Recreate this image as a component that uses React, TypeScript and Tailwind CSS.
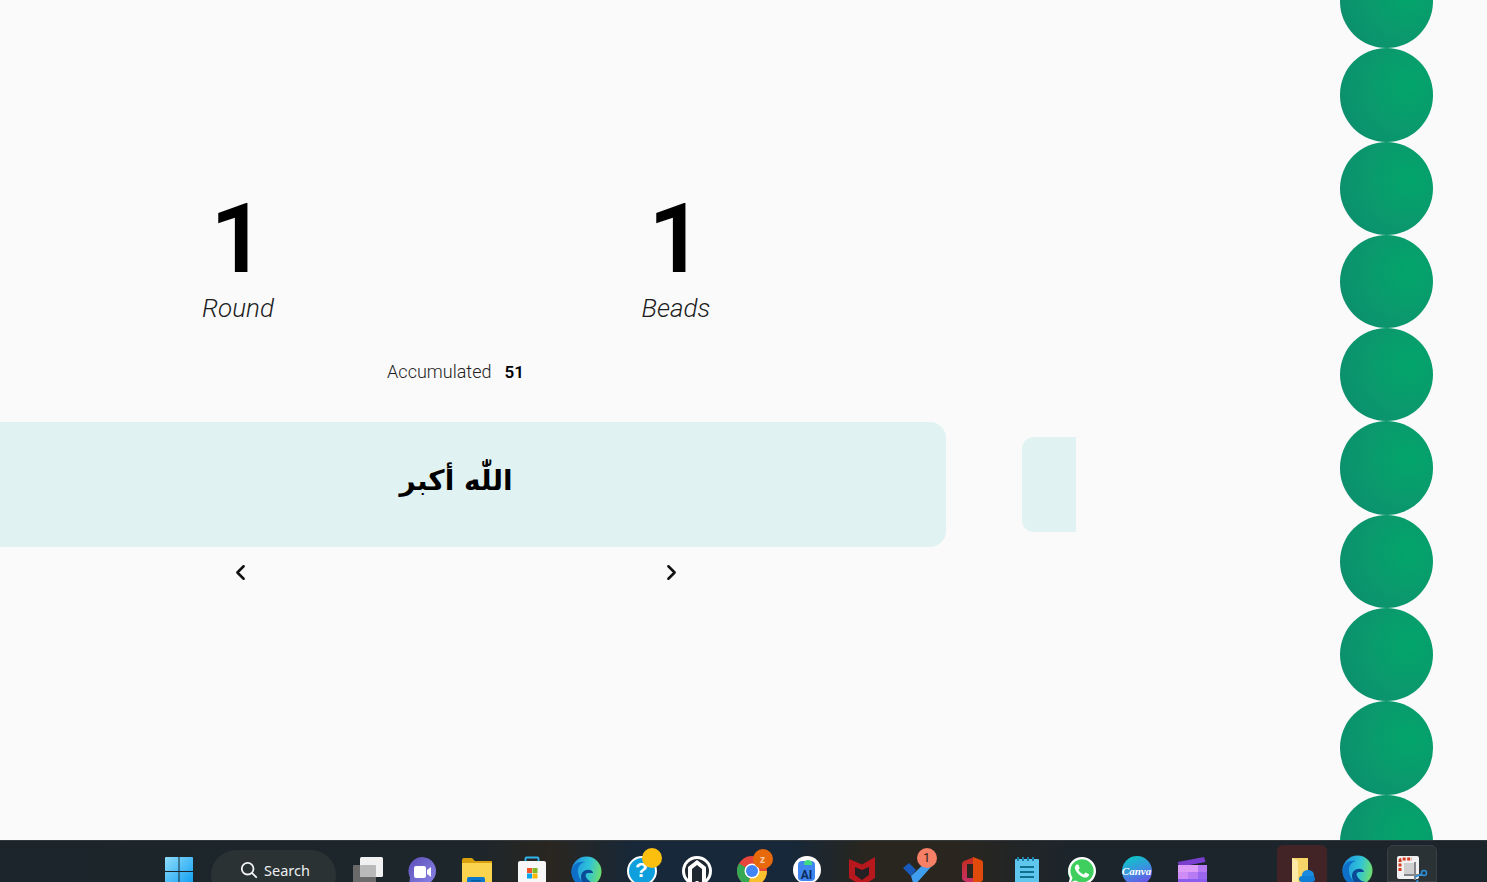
import { ChevronLeft, ChevronRight } from "lucide-react"
import { FaWhatsapp } from "react-icons/fa"

const beads = Array.from({ length: 10 }, (_, i) => i)

function WindowsIcon() {
  return (
    <svg width="30" height="30" viewBox="0 0 30 30">
      <defs>
        <linearGradient id="win" x1="0" y1="0" x2="1" y2="1">
          <stop offset="0" stopColor="#8fdcfb" />
          <stop offset="1" stopColor="#0a9df2" />
        </linearGradient>
      </defs>
      <path d="M1 2a1 1 0 0 1 1-1h12.500v14H1zM15.500 1H28a1 1 0 0 1 1 1v13H15.500zM1 16h13.500v14H1zM15.500 16H29v14H15.500z" fill="url(#win)" />
    </svg>
  )
}

function TaskViewIcon() {
  return (
    <svg width="32" height="30" viewBox="0 0 32 30">
      <rect x="0" y="9" width="23" height="21" rx="1" fill="#6a6a6a" />
      <rect x="7" y="1" width="23" height="20" rx="1.500" fill="#f1f1f1" />
      <rect x="7" y="9" width="16" height="12" rx="1" fill="#b9b9b9" />
    </svg>
  )
}

function MeetIcon() {
  return (
    <svg width="30" height="30" viewBox="0 0 30 30">
      <defs>
        <linearGradient id="meet" x1="0" y1="0" x2="1" y2="1">
          <stop offset="0" stopColor="#5a4fb8" />
          <stop offset="1" stopColor="#8d86e8" />
        </linearGradient>
      </defs>
      <path d="M15 1a14 14 0 1 1-8 25.500l-5 3 1-8A14 14 0 0 1 15 1z" fill="url(#meet)" />
      <rect x="7" y="10" width="12" height="12" rx="2" fill="#fff" />
      <path d="M20 14l4-3v10l-4-3z" fill="#fff" />
    </svg>
  )
}

function FolderIcon() {
  return (
    <svg width="32" height="30" viewBox="0 0 32 30">
      <path d="M1 4a2 2 0 0 1 2-2h8l3 3h17v6H1z" fill="#d9a10d" />
      <rect x="1" y="6" width="30" height="24" fill="#fbd44f" />
      <rect x="1" y="5" width="30" height="2" fill="#d9a10d" />
      <rect x="6" y="21" width="18" height="10" rx="2" fill="#0a78cf" />
      <rect x="10" y="24" width="10" height="1.500" fill="#075a9c" />
    </svg>
  )
}

function StoreIcon() {
  return (
    <svg width="30" height="30" viewBox="0 0 30 30">
      <path d="M8.500 6V2.500a1 1 0 0 1 1-1h11a1 1 0 0 1 1 1V6" fill="none" stroke="#2fb4ee" strokeWidth="1.800" />
      <path d="M1 7a2 2 0 0 1 2-2h24a2 2 0 0 1 2 2v23H1z" fill="#f7f7f7" />
      <rect x="10" y="12" width="5" height="5" fill="#f0562a" />
      <rect x="15.500" y="12" width="5" height="5" fill="#7fba21" />
      <rect x="10" y="17.500" width="5" height="5" fill="#06a5ee" />
      <rect x="15.500" y="17.500" width="5" height="5" fill="#fbb708" />
    </svg>
  )
}

function EdgeIcon({ id }: { id: string }) {
  return (
    <svg width="31" height="31" viewBox="0 0 31 31">
      <defs>
        <linearGradient id={`${id}a`} x1="0" y1="0.4" x2="1" y2="0.6">
          <stop offset="0" stopColor="#1f8fe0" />
          <stop offset="0.55" stopColor="#2fc4d8" />
          <stop offset="1" stopColor="#72e06a" />
        </linearGradient>
      </defs>
      <circle cx="15.500" cy="15.500" r="15" fill={`url(#${id}a)`} />
      <path d="M.5 16C1 8 8 5 14 6c-5 1-8 5-7 11 1 7 7 13 14 13-2 1-4 1.500-6 1.500C7 31 .5 24 .5 16z" fill="#0d6fc8" />
      <path d="M10 21c0-5 4-8 9-7 2 .5 3 2 3 3h-5c-2 0-3 2-2 4s4 6 9 6l-4 3c-6 0-10-4-10-9z" fill="#0a4a96" />
    </svg>
  )
}

function HelpIcon() {
  return (
    <div className="relative h-[30px] w-[30px]">
      <div className="flex h-[30px] w-[30px] items-start justify-center rounded-full border-2 border-white bg-[#0e9fdc] pt-[1px]">
        <span className="font-['Liberation_Sans',sans-serif] text-[21px] leading-[22px] font-bold text-white">?</span>
      </div>
      <div className="absolute -top-[8px] left-[15px] h-5 w-5 rounded-full bg-[#fdbf0d]" />
    </div>
  )
}

function NordIcon() {
  return (
    <svg width="30" height="30" viewBox="0 0 30 30">
      <circle cx="15" cy="15" r="15" fill="#fff" />
      <circle cx="15" cy="15" r="12" fill="#1f2730" />
      <path d="M15 4l9 7v17h-4V13l-5-4-5 4v15H6V11z" fill="#fff" />
      <path d="M9 30l6-6 6 6z" fill="#fff" />
      <path d="M12.500 13v12h5V13l-2.500-2z" fill="#1f2730" />
    </svg>
  )
}

function ChromeIcon() {
  return (
    <div className="relative h-[30px] w-[30px]">
      <svg width="30" height="30" viewBox="0 0 30 30">
        <circle cx="15" cy="15" r="15" fill="#e8453c" />
        <path d="M15 15L2 7.500A15 15 0 0 0 11 29.500z" fill="#34a853" />
        <path d="M15 15h15a15 15 0 0 1-19 14.500z" fill="#fbc02d" />
        <circle cx="15" cy="15" r="7.500" fill="#fff" />
        <circle cx="15" cy="15" r="6" fill="#4285f4" />
      </svg>
      <div className="absolute -top-[7px] left-[16px] flex h-5 w-5 items-center justify-center rounded-full bg-[#e8690b] font-['Roboto',sans-serif] text-[10px] font-bold text-[#f8c9a0]">
        z
      </div>
    </div>
  )
}

function StudioIcon() {
  return (
    <div className="relative flex h-[28px] w-[28px] justify-center rounded-full bg-white pt-[5px]">
      <div className="flex h-[20px] w-[17px] items-end justify-center rounded-sm bg-[#3f86f0] font-['Roboto',sans-serif] text-[12px] leading-none font-bold text-[#0c2c5c]">
        AI
      </div>
      <div className="absolute top-[4px] left-[11px] h-[5px] w-[8px] rounded-t-full bg-[#3ddc84]" />
    </div>
  )
}

function McAfeeIcon() {
  return (
    <svg width="26" height="30" viewBox="0 0 26 30">
      <path d="M0 3l13 5.500L26 1v21l-13 8-13-8z" fill="#b7181d" />
      <path d="M6 11l7 3 7-3v8l-7 5-7-5z" fill="#231f22" />
    </svg>
  )
}

function TodoIcon() {
  return (
    <div className="relative h-[30px] w-[30px]">
      <svg width="30" height="30" viewBox="0 0 30 30">
        <path d="M1 12l6-5 7 7-5 6z" fill="#195abd" />
        <path d="M9 20L24 6l5 5-17 19z" fill="#3f9ef0" />
      </svg>
      <div className="absolute -top-[8px] left-[15px] flex h-5 w-5 items-center justify-center rounded-full bg-[#f58066] font-['Roboto',sans-serif] text-xs text-[#2a1a18]">
        1
      </div>
    </div>
  )
}

function OfficeIcon() {
  return (
    <svg width="24" height="30" viewBox="0 0 24 30">
      <defs>
        <linearGradient id="office" x1="0" y1="0" x2="0" y2="1">
          <stop offset="0" stopColor="#c42b1c" />
          <stop offset="1" stopColor="#c8326e" />
        </linearGradient>
      </defs>
      <path d="M14 1L4 5Q2 6 2 8v14q0 2 2 3l10 4z" fill="url(#office)" />
      <rect x="7" y="8" width="8" height="14" fill="#2a261f" />
      <path d="M13 1l8 3q2 .7 2 3v16q0 2.300-2 3l-8 3z" fill="#e04a0a" />
    </svg>
  )
}

function NotepadIcon() {
  return (
    <svg width="26" height="30" viewBox="0 0 26 30">
      <rect x="1" y="3" width="24" height="27" rx="1" fill="#5fc6ee" />
      <rect x="3" y="1" width="2" height="4" fill="#1d7fa8" />
      <rect x="8" y="1" width="2" height="4" fill="#1d7fa8" />
      <rect x="13" y="1" width="2" height="4" fill="#1d7fa8" />
      <rect x="18" y="1" width="2" height="4" fill="#1d7fa8" />
      <rect x="6" y="10" width="14" height="2" fill="#12708f" />
      <rect x="6" y="15" width="14" height="2" fill="#12708f" />
      <rect x="6" y="20" width="14" height="2" fill="#12708f" />
    </svg>
  )
}

function WhatsAppIcon() {
  return (
    <div className="relative flex h-[30px] w-[30px] items-center justify-center">
      <div className="absolute h-[27px] w-[27px] rounded-full bg-[#3fcf5e]" />
      <FaWhatsapp className="relative text-white" size={32} />
    </div>
  )
}

function CanvaIcon() {
  return (
    <div className="flex h-[30px] w-[30px] items-center justify-center rounded-full bg-[linear-gradient(160deg,#0fc4c8_10%,#3d8fe0_50%,#7c3bea_100%)] font-['Liberation_Serif',serif] text-[11px] font-bold text-white italic">
      Canva
    </div>
  )
}

function ClapperIcon() {
  return (
    <svg width="30" height="30" viewBox="0 0 30 30">
      <path d="M1 6L27 1l1.500 5L2 11z" fill="#7b3fd0" />
      <rect x="1" y="9" width="29" height="21" fill="#8a5cf0" />
      <rect x="1" y="9" width="20" height="7" fill="#dc9cf8" />
      <rect x="1" y="16" width="10" height="7" fill="#d08cf6" />
      <rect x="11" y="16" width="10" height="7" fill="#b77cf4" />
      <rect x="21" y="9" width="9" height="7" fill="#b57af4" />
      <rect x="21" y="16" width="9" height="7" fill="#9a66f0" />
    </svg>
  )
}

function OneDriveFolderIcon() {
  return (
    <svg width="28" height="30" viewBox="0 0 28 30">
      <rect x="4" y="0" width="16" height="30" fill="#f8d568" />
      <path d="M4 0l6 3v27H4z" fill="#fdeaa6" />
      <ellipse cx="20" cy="17" rx="6" ry="5" fill="#1a8ae0" />
      <rect x="11" y="18" width="16" height="6" rx="3" fill="#0f7fd6" />
    </svg>
  )
}

function SnipIcon() {
  return (
    <svg width="32" height="30" viewBox="0 0 32 30">
      <rect x="1" y="0" width="22" height="23" rx="2" fill="#f1f1f1" />
      <path d="M4 15V5a2 2 0 0 1 2-2h10" fill="none" stroke="#d3391c" strokeWidth="3" strokeDasharray="3 1.500" />
      <rect x="8" y="7" width="12" height="12" fill="#cfcfcf" />
      <path d="M19 6v18M8 19h18" stroke="#85868c" strokeWidth="2" />
      <circle cx="28" cy="17" r="2.500" fill="none" stroke="#2a8fd8" strokeWidth="1.600" />
      <path d="M19 21l7-3M22 24l-3 5" stroke="#2a8fd8" strokeWidth="1.800" />
    </svg>
  )
}

const pinnedApps = [
  <MeetIcon />,
  <FolderIcon />,
  <StoreIcon />,
  <EdgeIcon id="edge1" />,
  <HelpIcon />,
  <NordIcon />,
  <ChromeIcon />,
  <StudioIcon />,
  <McAfeeIcon />,
  <TodoIcon />,
  <OfficeIcon />,
  <NotepadIcon />,
  <WhatsAppIcon />,
  <CanvaIcon />,
  <ClapperIcon />,
]

function Taskbar() {
  return (
    <div className="flex h-[42px] shrink-0 overflow-hidden border-t border-[#33383d] bg-[linear-gradient(90deg,#1c252b_0%,#1d262b_32%,#2a2620_37%,#16283a_43%,#16283a_53%,#28261f_58%,#2a261f_64%,#1c252c_72%,#1c252c_100%)] pl-[151px]">
      <div className="flex w-[55px] justify-center pt-[15px]">
        <WindowsIcon />
      </div>
      <div className="mt-[9px] ml-[5px] flex h-[50px] w-[125px] justify-center gap-[6px] rounded-full bg-[#2a3234] pt-[9px] pl-[3px]">
        <svg width="18" height="18" viewBox="0 0 20 20" className="mt-[2px]" fill="none" stroke="#f2f4f4" strokeWidth="2">
          <circle cx="8.500" cy="8.500" r="6.500" />
          <path d="M13.500 13.500L18 18" strokeLinecap="round" />
        </svg>
        <span className="font-['Noto_Sans',sans-serif] text-[14.5px] leading-[22px] text-[#eef0f0]">Search</span>
      </div>
      <div className="ml-[5px] flex w-[55px] justify-center pt-[15px]">
        <TaskViewIcon />
      </div>
      <div className="-ml-[2px] flex">
        {pinnedApps.map((app, i) => (
          <div key={i} className="flex w-[55px] justify-center pt-[15px]">
            {app}
          </div>
        ))}
      </div>
      <div className="mt-1 ml-[58px] flex w-[50px] justify-center rounded-t-md bg-[#432426] pt-[13px]">
        <OneDriveFolderIcon />
      </div>
      <div className="mt-1 flex w-[60px] justify-center pt-[10px]">
        <EdgeIcon id="edge2" />
      </div>
      <div className="mt-1 flex w-[50px] justify-center rounded-t-md border border-[#3a4044] bg-[#2b3236] pt-[10px]">
        <SnipIcon />
      </div>
    </div>
  )
}

function Stat({ value, label }: { value: string; label: string }) {
  return (
    <div className="flex w-[438px] flex-col items-center">
      <div className="mt-[2px] text-[97px] leading-[109px] font-semibold text-black">{value}</div>
      <div className="text-[26px] leading-[28px] font-light text-[#1c1c1c] italic">{label}</div>
    </div>
  )
}

export default function App() {
  return (
    <div className="flex h-screen w-full flex-col overflow-hidden bg-[#fafafa] font-['Roboto',sans-serif]">
      <div className="flex min-h-0 flex-1">
        <div className="w-[1076px] shrink-0 overflow-hidden pt-[183px]">
          <div className="flex pl-[19px]">
            <Stat value="1" label="Round" />
            <Stat value="1" label="Beads" />
          </div>
          <div className="mt-[36px] flex w-[910px] items-center justify-center gap-[14px] pl-[1px] text-[18px] leading-[28px]">
            <span className="font-light text-[#222]">Accumulated</span>
            <span className="-mt-[1px] -ml-[1px] text-[17px] font-semibold text-black">51</span>
          </div>
          <div className="mt-[36px] -ml-[36px] flex items-center">
            <div className="flex h-[125px] w-[982px] shrink-0 justify-center rounded-2xl bg-[#e0f2f1] pt-[31px] pl-[2px]">
              <span dir="rtl" className="font-['DejaVu_Sans',sans-serif] text-[28px] leading-[56px] font-bold text-black">
                اللّٰه أكبر
              </span>
            </div>
            <div className="ml-[76px] h-[95px] w-[100px] shrink-0 rounded-xl bg-[#e0f2f1]" />
          </div>
          <div className="mt-[13px] flex w-[910px] justify-center gap-[406px] pl-[1px] text-[#111]">
            <ChevronLeft size={25} strokeWidth={2.4} />
            <ChevronRight size={25} strokeWidth={2.4} />
          </div>
        </div>
        <div className="-mt-[45px] ml-[264px] flex w-[93px] shrink-0 flex-col">
          {beads.map((bead) => (
            <div
              key={bead}
              className="h-[93.3px] w-[93px] shrink-0 rounded-full bg-[radial-gradient(circle_at_75%_40%,#02a56b_0%,#0a9a6c_45%,#0b926d_75%,#1f7f72_100%)]"
            />
          ))}
        </div>
      </div>
      <Taskbar />
    </div>
  )
}
